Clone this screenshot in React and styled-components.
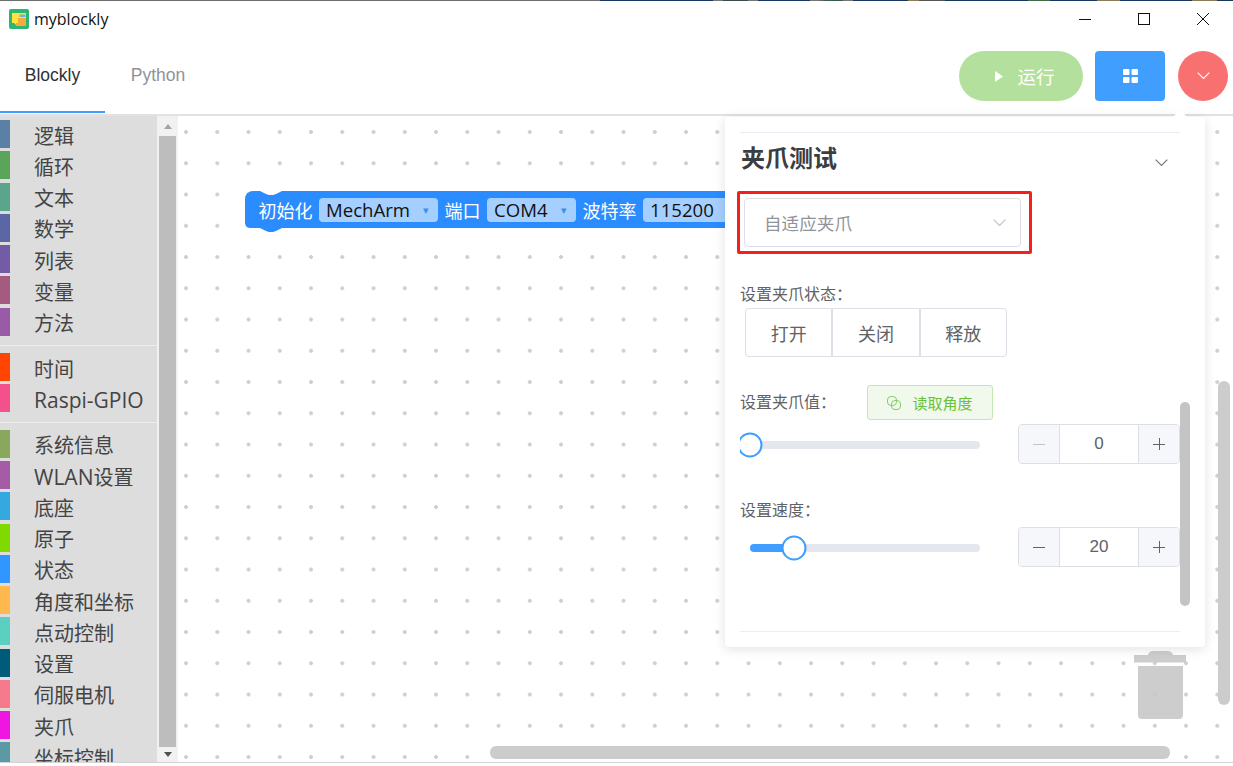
import styled, { createGlobalStyle } from 'styled-components';

const GlobalStyle = createGlobalStyle`
    html, body {
        margin: 0;
        padding: 0;
        background: #ffffff;
        font-family: "Liberation Sans", "Noto Sans CJK SC", sans-serif;
    }

    * {
        box-sizing: border-box;
    }
`;

const Page = styled.div`
    position: relative;
    display: flex;
    flex-direction: column;
    width: 1233px;
    height: 766px;
    overflow: hidden;
    background: #ffffff;
`;

const DesktopEdge = styled.div`
    height: 1px;
    flex: none;
    background: linear-gradient(to right, #6e6e6e 0, #6e6e6e 600px, #17375e 600px, #17375e 713px, #77776f 713px, #77776f 723px, #3a4a50 723px, #3a4a50 748px, #77776f 748px, #77776f 758px, #17375e 758px, #17375e 810px, #77776f 810px, #77776f 818px, #3a5a50 826px, #3a5a50 843px, #77776f 843px, #77776f 853px, #17375e 853px, #17375e 908px, #8a7d55 908px, #8a7d55 919px, #555555 919px, #555555 945px, #17375e 945px, #17375e 1028px, #3d6b45 1028px, #3d6b45 1050px, #17375e 1050px, #17375e 1097px, #8a7d55 1097px, #8a7d55 1120px, #17375e 1120px, #17375e 1192px, #8a7d55 1192px, #8a7d55 1217px, #17375e 1217px);
`;

const TitleBar = styled.div`
    display: flex;
    align-items: center;
    flex: none;
    height: 37px;
    padding: 0 0 2px 9px;
`;

const AppName = styled.span`
    margin-left: 5px;
    font-family: "Open Sans", "Liberation Sans", sans-serif;
    font-size: 16px;
    color: #111111;
`;

const WindowControls = styled.div`
    display: flex;
    margin-left: auto;
    padding-right: 1px;
`;

const WindowButton = styled.div`
    display: flex;
    align-items: center;
    justify-content: center;
    width: 59px;
    height: 35px;
`;

const Header = styled.header`
    display: flex;
    flex: none;
    height: 75px;
`;

const Tabs = styled.nav`
    display: flex;
`;

const Tab = styled.div`
    display: flex;
    align-items: center;
    justify-content: center;
    width: ${p => p.$width}px;
    height: 75px;
    padding-top: 1px;
    font-size: 17.5px;
    color: ${p => (p.$active ? '#303133' : '#909399')};
    border-bottom: 2px solid ${p => (p.$active ? '#409eff' : 'transparent')};
`;

const Actions = styled.div`
    display: flex;
    margin-left: auto;
    padding: 13px 5px 0 0;
`;

const RunButton = styled.div`
    display: flex;
    align-items: center;
    justify-content: center;
    gap: 14px;
    width: 124px;
    height: 50px;
    padding-left: 8px;
    border-radius: 25px;
    background: #b3e19d;
    color: #ffffff;
    font-size: 18.5px;
`;

const GridButton = styled.div`
    display: flex;
    align-items: center;
    justify-content: center;
    width: 70px;
    height: 50px;
    margin-left: 12px;
    border-radius: 4px;
    background: #409eff;
`;

const RoundButton = styled.div`
    display: flex;
    align-items: center;
    justify-content: center;
    width: 50px;
    height: 50px;
    margin-left: 13px;
    border-radius: 50%;
    background: #f97070;
`;

const Body = styled.div`
    display: flex;
    flex: none;
    height: 649px;
    border-top: 2px solid #e2e2e2;
    margin-top: 1px;
    border-bottom: 1px solid #d4d4d4;
`;

const Toolbox = styled.div`
    flex: none;
    width: 157px;
    padding-top: 4px;
    overflow: hidden;
    background: #dddddd;
`;

const Category = styled.div`
    display: flex;
    align-items: center;
    height: 31.25px;
    padding-bottom: 3px;
`;

const CategoryColor = styled.div`
    flex: none;
    width: 10px;
    height: 28px;
    background: ${p => p.$color};
`;

const CategoryLabel = styled.span`
    margin: 3px 0 0 24px;
    font-family: "Noto Sans CJK SC", sans-serif;
    font-size: 20px;
    line-height: 28px;
    white-space: nowrap;
    color: #444444;
`;

const LatinPart = styled.span`
    font-family: "Open Sans", sans-serif;
    font-size: 21px;
`;

const CategoryGap = styled.div`
    display: flex;
    align-items: center;
    height: 14.25px;

    &::before {
        content: "";
        width: 100%;
        height: 1px;
        background: #eeeeee;
    }
`;

const ToolboxScroll = styled.div`
    display: flex;
    flex-direction: column;
    flex: none;
    width: 21px;
    padding: 0 2px;
    background: #f1f1f1;
`;

const ScrollArrow = styled.div`
    display: flex;
    align-items: center;
    justify-content: center;
    flex: none;
    height: ${p => p.$height}px;

    &::before {
        content: "";
        border-left: 4.5px solid transparent;
        border-right: 4.5px solid transparent;
        ${p => (p.$down ? 'border-top: 5px solid #505050;' : 'border-bottom: 5px solid #a3a3a3;')}
    }
`;

const ScrollThumb = styled.div`
    flex: 1;
    background: #bdbdbd;
`;

const Workspace = styled.main`
    position: relative;
    flex: 1;
    overflow: hidden;
    background-color: #ffffff;
    background-image: radial-gradient(circle at center, #cfcfcf 1.6px, transparent 2.2px);
    background-size: 31.25px 31.25px;
    background-position: -7.6px 0.4px;
`;

const Block = styled.div`
    position: absolute;
    left: 67px;
    top: 75px;
    display: flex;
    align-items: center;
    gap: 6.5px;
    width: 530px;
    height: 37px;
    padding: 0 0 0 13.5px;
    border-radius: 8px 0 0 5px;
    background: #2b8cff;
    color: #ffffff;
    font-family: "Open Sans", "Noto Sans CJK SC", sans-serif;
    font-size: 18px;

    &::before {
        content: "";
        position: absolute;
        left: 15px;
        top: 0;
        width: 22px;
        height: 4px;
        background: #ffffff;
        clip-path: polygon(0 0, 100% 0, 75% 70%, 60% 100%, 40% 100%, 25% 70%);
    }

    &::after {
        content: "";
        position: absolute;
        left: 15px;
        bottom: -4px;
        width: 22px;
        height: 4px;
        background: #2b8cff;
        clip-path: polygon(0 0, 100% 0, 75% 70%, 60% 100%, 40% 100%, 25% 70%);
    }
`;

const BlockField = styled.div`
    display: flex;
    align-items: center;
    width: ${p => p.$width}px;
    height: 24px;
    padding-left: 7px;
    border-radius: 4px;
    background: #a5cfff;
    color: #111111;
    font-size: 18.6px;

    &::after {
        content: "▾";
        margin-left: auto;
        margin-right: 9px;
        font-size: 11px;
        color: #3f8fe8;
    }
`;

const Trash = styled.div`
    position: absolute;
    left: 956px;
    top: 535px;
    opacity: 0.9;
`;

const VerticalBar = styled.div`
    position: absolute;
    left: 1040px;
    top: 265px;
    width: 12px;
    height: 324px;
    border-radius: 6px;
    background: #cccccc;
`;

const HorizontalBar = styled.div`
    position: absolute;
    left: 312px;
    top: 630px;
    width: 680px;
    height: 13px;
    border-radius: 6px;
    background: #cccccc;
`;

const Popover = styled.div`
    position: absolute;
    left: 725px;
    top: 117px;
    width: 480px;
    height: 530px;
    padding: 15px 25px 0 15px;
    border-radius: 4px;
    background: #ffffff;
    box-shadow: 0 2px 12px rgba(0, 0, 0, 0.12);

    &::before {
        content: "";
        position: absolute;
        right: 20px;
        top: -5px;
        width: 10px;
        height: 10px;
        background: #ffffff;
        transform: rotate(45deg);
    }
`;

const Divider = styled.div`
    position: relative;
    height: 1px;
    background: #ebeef5;
`;

const SectionHead = styled.div`
    display: flex;
    justify-content: space-between;
    height: 50px;
    padding: 8px 12px 0 1px;
`;

const SectionTitle = styled.h2`
    margin: 0;
    font-size: 24px;
    line-height: 35px;
    font-weight: 700;
    color: #3c3d40;
`;

const SectionToggle = styled.div`
    padding-top: 12px;
`;

const Highlight = styled.div`
    width: 295px;
    height: 63px;
    margin: 8px 0 0 -3px;
    padding: 4px 8px 4px 4px;
    border: 3px solid #f5201c;
    border-radius: 2px;
`;

const Select = styled.div`
    display: flex;
    align-items: center;
    justify-content: space-between;
    height: 49px;
    padding: 0 14px 0 19px;
    border: 1px solid #dcdfe6;
    border-radius: 4px;
    font-size: 17.6px;
    color: #909399;
`;

const FieldLabel = styled.div`
    width: ${p => p.$width || 'auto'};
    margin-top: ${p => p.$top || 0}px;
    font-size: 16px;
    line-height: 20px;
    color: #606266;
`;

const ButtonGroup = styled.div`
    display: flex;
    width: 262px;
    height: 49px;
    margin: 3px 0 0 5px;
`;

const GroupButton = styled.div`
    display: flex;
    align-items: center;
    justify-content: center;
    flex: 1;
    border: 1px solid #dcdfe6;
    font-size: 18px;
    color: #606266;

    &:first-child {
        border-radius: 4px 0 0 4px;
    }

    &:last-child {
        border-radius: 0 4px 4px 0;
    }
`;

const ReadRow = styled.div`
    display: flex;
    align-items: center;
    height: 35px;
    margin-top: 28px;
`;

const ReadButton = styled.div`
    display: flex;
    align-items: center;
    justify-content: center;
    gap: 11px;
    width: 126px;
    height: 35px;
    border: 1px solid #c2e7b0;
    border-radius: 3px;
    background: #f0f9eb;
    font-size: 15px;
    color: #67c23a;
`;

const SliderRow = styled.div`
    display: flex;
    align-items: center;
    justify-content: space-between;
    height: 40px;
    margin-top: ${p => p.$top}px;
`;

const SliderClip = styled.div`
    display: flex;
    align-items: center;
    width: 250px;
    height: 40px;
    padding: 0 10px;
    overflow: hidden;
`;

const SliderRail = styled.div`
    position: relative;
    width: 230px;
    height: 8px;
    margin-top: 1px;
    border-radius: 4px;
    background: #e4e7ed;
`;

const SliderFill = styled.div`
    width: ${p => p.$value}%;
    height: 100%;
    border-radius: 4px 0 0 4px;
    background: #409eff;
`;

const SliderThumb = styled.div`
    position: absolute;
    left: ${p => p.$value}%;
    top: 50%;
    width: 25px;
    height: 25px;
    border: 2px solid #409eff;
    border-radius: 50%;
    background: #ffffff;
    transform: translate(-50%, -50%);
`;

const NumberInput = styled.div`
    display: flex;
    width: 162px;
    height: 40px;
    border: 1px solid #dcdfe6;
    border-radius: 4px;
    overflow: hidden;
`;

const Stepper = styled.div`
    display: flex;
    align-items: center;
    justify-content: center;
    flex: none;
    width: 41px;
    background: #f5f7fa;
    border-${p => p.$side}: 1px solid #dcdfe6;
`;

const NumberValue = styled.div`
    display: flex;
    align-items: center;
    justify-content: center;
    flex: 1;
    font-size: 17px;
    color: #606266;
`;

const PanelScroll = styled.div`
    position: absolute;
    left: 455px;
    top: 285px;
    width: 10px;
    height: 204px;
    border-radius: 5px;
    background: #c4c4c4;
`;

const FootDivider = styled(Divider)`
    margin-top: 64px;
`;

const groups = [
    [
        ['逻辑', '#5b80a5'],
        ['循环', '#5ba55b'],
        ['文本', '#5ba58c'],
        ['数学', '#5b67a5'],
        ['列表', '#745ba5'],
        ['变量', '#a55b80'],
        ['方法', '#995ba5'],
    ],
    [
        ['时间', '#ff4500'],
        ['Raspi-GPIO', '#f4508c'],
    ],
    [
        ['系统信息', '#8aa85d'],
        ['WLAN设置', '#a55ba5'],
        ['底座', '#33a9e0'],
        ['原子', '#80d900'],
        ['状态', '#2f97ff'],
        ['角度和坐标', '#ffb84d'],
        ['点动控制', '#5bcfc0'],
        ['设置', '#005a7a'],
        ['伺服电机', '#f57a8c'],
        ['夹爪', '#ee16e0'],
        ['坐标控制', '#5b9aa5'],
    ],
];

function Logo() {
    return <svg width="20" height="20" viewBox="0 0 20 20">
        <rect width="20" height="20" rx="2" fill="#2bb673"/>
        <path d="M3 4h14v5H9v5H7v2l-2-2H3z" fill="#ffe23d"/>
        <path d="M9 9h8v8H7v-3h2z" fill="#f7a93b"/>
        <path d="M10.500 5.500h6v2.500h-6z" fill="#6fb4d8"/>
    </svg>;
}

function Chevron({ size = 12, color = '#606266', width = 1.2 }) {
    return <svg width={size} height={size * 0.6} viewBox="0 0 20 12" fill="none" stroke={color} strokeWidth={width * 20 / size}>
        <path d="M1 1l9 9 9-9"/>
    </svg>;
}

function Minus({ color }) {
    return <svg width="14" height="14" viewBox="0 0 14 14" stroke={color}><path d="M1 7.500h12"/></svg>;
}

function Plus() {
    return <svg width="14" height="14" viewBox="0 0 14 14" stroke="#606266"><path d="M1 7.500h12M7.500 1v12"/></svg>;
}

function Counter({ value, minusColor }) {
    return <NumberInput>
        <Stepper $side="right"><Minus color={minusColor}/></Stepper>
        <NumberValue>{value}</NumberValue>
        <Stepper $side="left"><Plus/></Stepper>
    </NumberInput>;
}

function Slider({ value }) {
    return <SliderClip>
        <SliderRail>
            <SliderFill $value={value}/>
            <SliderThumb $value={value}/>
        </SliderRail>
    </SliderClip>;
}

// latin runs in the toolbox are a bit wider than the fallback font gives
function ToolboxText({ text }) {
    return <CategoryLabel>
        {text.split(/([A-Za-z-]+)/).map((part, i) => i % 2 ? <LatinPart key={i}>{part}</LatinPart> : part)}
    </CategoryLabel>;
}

export default function App() {
    return <Page>
        <GlobalStyle/>
        <DesktopEdge/>
        <TitleBar>
            <Logo/>
            <AppName>myblockly</AppName>
            <WindowControls>
                <WindowButton>
                    <svg width="12" height="12" viewBox="0 0 12 12" stroke="#111"><path d="M0 6.500h12"/></svg>
                </WindowButton>
                <WindowButton>
                    <svg width="12" height="12" viewBox="0 0 12 12" fill="none" stroke="#111"><rect x="0.500" y="0.500" width="11" height="11"/></svg>
                </WindowButton>
                <WindowButton>
                    <svg width="12" height="12" viewBox="0 0 12 12" stroke="#111"><path d="M0 0l12 12M12 0L0 12"/></svg>
                </WindowButton>
            </WindowControls>
        </TitleBar>
        <Header>
            <Tabs>
                <Tab $active $width={105}>Blockly</Tab>
                <Tab $width={106}>Python</Tab>
            </Tabs>
            <Actions>
                <RunButton>
                    <svg width="8" height="11" viewBox="0 0 8 11" fill="#fff"><path d="M0 0l8 5.500L0 11z"/></svg>
                    运行
                </RunButton>
                <GridButton>
                    <svg width="15" height="14" viewBox="0 0 15 14" fill="#fff">
                        <rect width="6.500" height="6" rx="1"/>
                        <rect x="8.500" width="6.500" height="6" rx="1"/>
                        <rect y="8" width="6.500" height="6" rx="1"/>
                        <rect x="8.500" y="8" width="6.500" height="6" rx="1"/>
                    </svg>
                </GridButton>
                <RoundButton>
                    <Chevron size={13} color="#ffffff"/>
                </RoundButton>
            </Actions>
        </Header>
        <Body>
            <Toolbox>
                {groups.map((group, i) => <div key={i}>
                    {i > 0 && <CategoryGap/>}
                    {group.map(([label, color]) => <Category key={label}>
                        <CategoryColor $color={color}/>
                        <ToolboxText text={label}/>
                    </Category>)}
                </div>)}
            </Toolbox>
            <ToolboxScroll>
                <ScrollArrow $height={20}/>
                <ScrollThumb/>
                <ScrollArrow $height={15} $down/>
            </ToolboxScroll>
            <Workspace>
                <Block>
                    初始化
                    <BlockField $width={119}>MechArm</BlockField>
                    端口
                    <BlockField $width={89}>COM4</BlockField>
                    波特率
                    <BlockField $width={110}>115200</BlockField>
                </Block>
                <Trash>
                    <svg width="52" height="68" viewBox="0 0 52 68" fill="#c8c8c8">
                        <path d="M0 4h14q1-4 5-4h14q5 0 6 4h13v7.500H0z"/>
                        <path d="M4 15h45v49q0 4-4 4H8q-4 0-4-4z"/>
                    </svg>
                </Trash>
                <VerticalBar/>
                <HorizontalBar/>
            </Workspace>
        </Body>
        <Popover>
            <Divider/>
            <SectionHead>
                <SectionTitle>夹爪测试</SectionTitle>
                <SectionToggle>
                    <Chevron size={13} color="#777777"/>
                </SectionToggle>
            </SectionHead>
            <Highlight>
                <Select>
                    自适应夹爪
                    <Chevron size={13} color="#c0c4cc"/>
                </Select>
            </Highlight>
            <FieldLabel $top={31}>设置夹爪状态：</FieldLabel>
            <ButtonGroup>
                <GroupButton>打开</GroupButton>
                <GroupButton>关闭</GroupButton>
                <GroupButton>释放</GroupButton>
            </ButtonGroup>
            <ReadRow>
                <FieldLabel $width="127px">设置夹爪值：</FieldLabel>
                <ReadButton>
                    <svg width="14" height="14" viewBox="0 0 14 14" fill="none" stroke="#85ce61">
                        <rect x="0.500" y="0.500" width="9" height="9" rx="3.500"/>
                        <rect x="4.500" y="4.500" width="9" height="9" rx="3.500"/>
                    </svg>
                    读取角度
                </ReadButton>
            </ReadRow>
            <SliderRow $top={4}>
                <Slider value={0}/>
                <Counter value={0} minusColor="#c0c4cc"/>
            </SliderRow>
            <FieldLabel $top={37}>设置速度：</FieldLabel>
            <SliderRow $top={6}>
                <Slider value={19}/>
                <Counter value={20} minusColor="#606266"/>
            </SliderRow>
            <FootDivider/>
            <PanelScroll/>
        </Popover>
    </Page>;
}
